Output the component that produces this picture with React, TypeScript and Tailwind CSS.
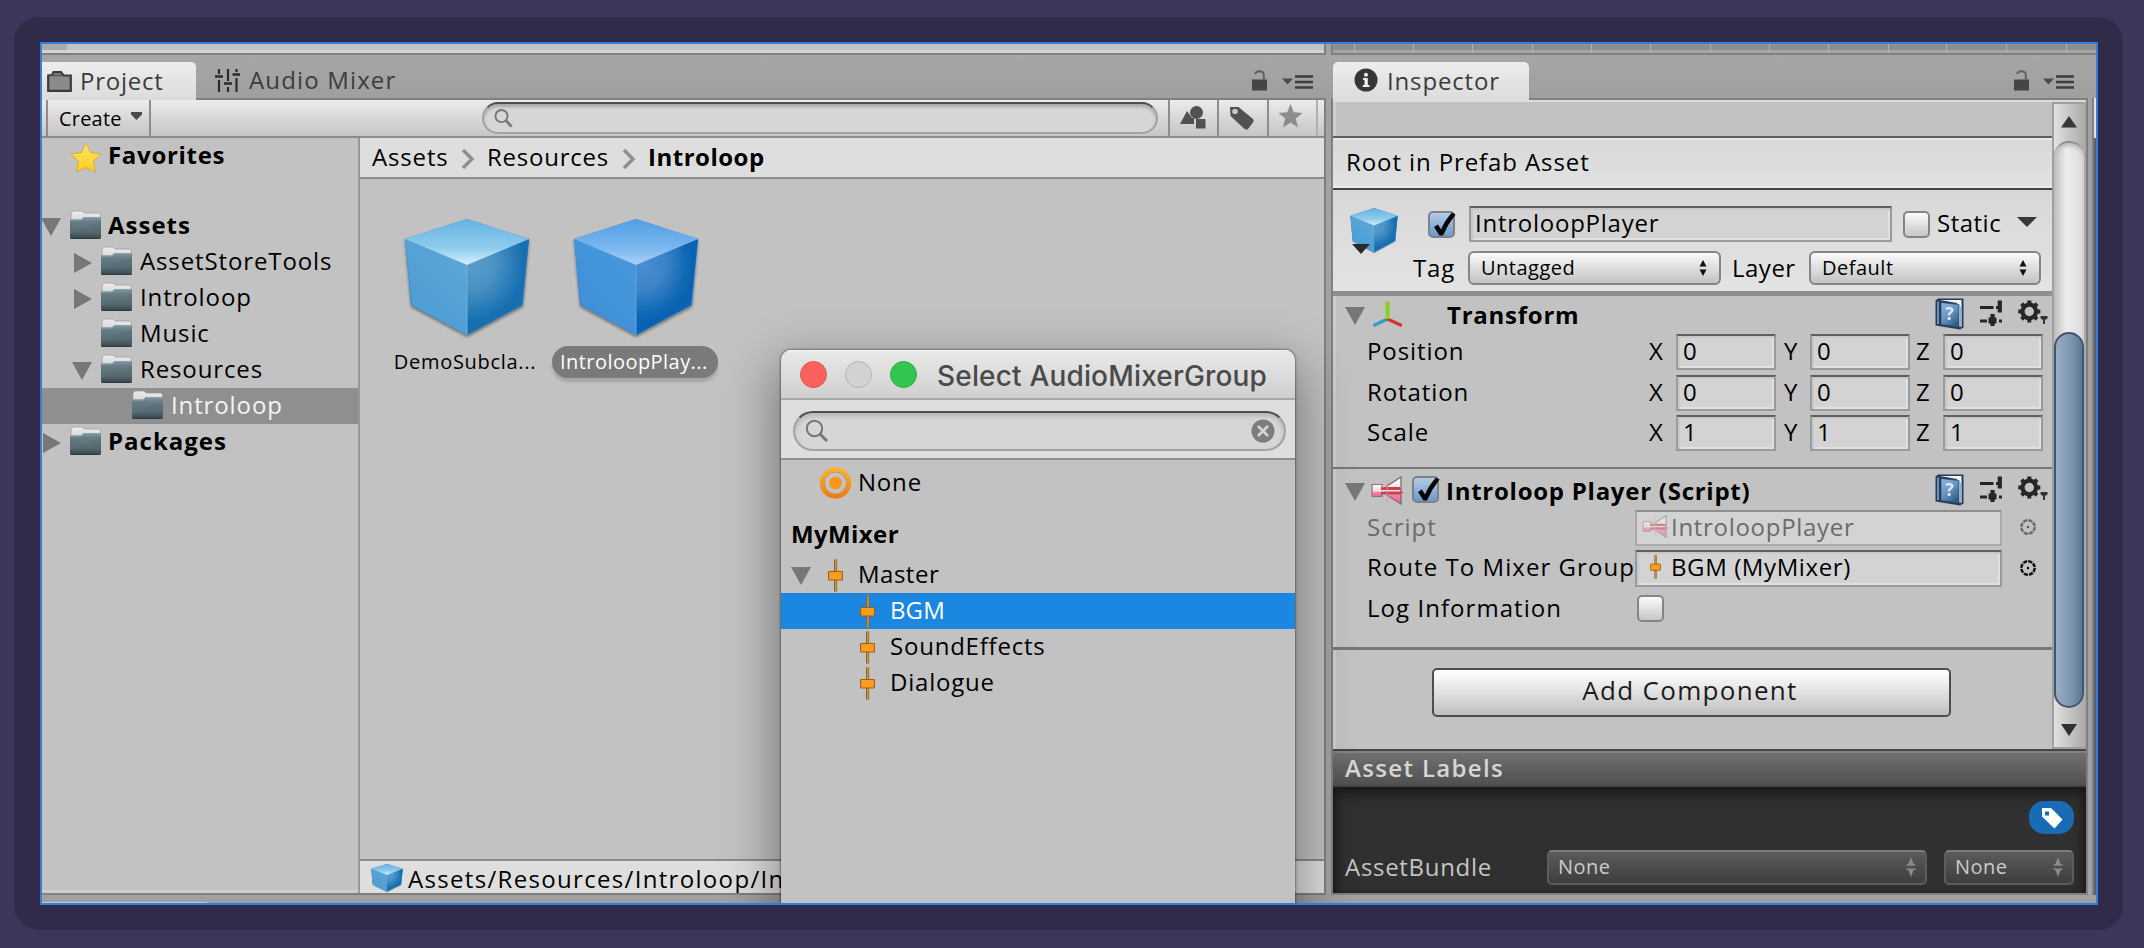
import React from "react";

type Kids = { children?: React.ReactNode; className?: string };

const Label = ({ children, className = "" }: Kids) => (
  <span className={`whitespace-nowrap ${className}`}>{children}</span>
);

const Cube = ({ id, w, h, deep = false }: { id: string; w: number; h: number; deep?: boolean }) => (
  <svg width={w} height={h} viewBox="0 0 126 118" className="shrink-0 overflow-visible" preserveAspectRatio="none">
    <defs>
      <linearGradient id={`${id}t`} x1="0" y1="0" x2="0" y2="1">
        <stop offset="0" stopColor={deep ? "#519fe4" : "#67b2e4"} />
        <stop offset="0.6" stopColor={deep ? "#78b5ee" : "#8ccaec"} />
        <stop offset="1" stopColor={deep ? "#a8d2f8" : "#d6effa"} />
      </linearGradient>
      <linearGradient id={`${id}l`} x1="0.2" y1="1" x2="0.8" y2="0">
        <stop offset="0" stopColor={deep ? "#3d8fd6" : "#4a9fd6"} />
        <stop offset="0.4" stopColor={deep ? "#4192d8" : "#519fd4"} />
        <stop offset="1" stopColor={deep ? "#4797dc" : "#5ea8d8"} />
      </linearGradient>
      <radialGradient id={`${id}r`} gradientUnits="userSpaceOnUse" cx="68" cy="44" r="58" gradientTransform="translate(68 44) scale(0.9 1) translate(-68 -44)">
        <stop offset="0" stopColor={deep ? "#4a8ed0" : "#5a9bc8"} />
        <stop offset="0.45" stopColor={deep ? "#3d85c8" : "#4a92c4"} />
        <stop offset="0.85" stopColor={deep ? "#126ab6" : "#2478b5"} />
        <stop offset="1" stopColor={deep ? "#0a63b2" : "#176fb0"} />
      </radialGradient>
      <filter id={`${id}s`} x="-10%" y="-10%" width="120%" height="125%">
        <feDropShadow dx="0" dy="2" stdDeviation="1.8" floodColor="#000" floodOpacity="0.45" />
      </filter>
    </defs>
    <g filter={`url(#${id}s)`}>
      <path d="M63 0 L125 20 L119 86 L63 116 L7 86 L1 20 Z" fill="#2f86c8" />
    </g>
    <path d="M1 20 L63 46 L63 116 L8 86 Z" fill={`url(#${id}l)`} />
    <path d="M125 20 L63 46 L63 116 L118 86 Z" fill={`url(#${id}r)`} />
    <path d="M63 0 L125 20 L63 46 L1 20 Z" fill={`url(#${id}t)`} />
    <path d="M63 46 V116" stroke={deep ? "#5aa3e2" : "#6cb3e0"} strokeWidth="1" />
  </svg>
);

const Folder = () => (
  <svg width="33" height="30" viewBox="0 0 33 30" className="shrink-0">
    <defs>
      <linearGradient id="fold" x1="0" y1="0" x2="0" y2="1">
        <stop offset="0" stopColor="#8097a1" />
        <stop offset="0.25" stopColor="#667b84" />
        <stop offset="0.7" stopColor="#5a6c74" />
        <stop offset="1" stopColor="#3a484f" />
      </linearGradient>
      <linearGradient id="foldb" x1="0" y1="0" x2="0" y2="1">
        <stop offset="0" stopColor="#ececec" />
        <stop offset="1" stopColor="#b5b5b5" />
      </linearGradient>
    </defs>
    <path d="M2 28 V4.500 Q2 1 5 1 H12 Q14.500 1 15 3 H29.500 Q31.500 3 31.500 5 V28 Z" fill="url(#foldb)" stroke="#999" strokeWidth="0.700" />
    <path d="M1 10 Q1 9.500 2.500 9.500 H12 L14.500 7 H31 Q32 7 32 8.500 V27 Q32 28.500 30.500 28.500 H2.500 Q1 28.500 1 27 Z" fill="url(#fold)" />
    <path d="M1.500 10 H12.300 L14.800 7.500 H31.500" stroke="#8aa2ac" strokeWidth="1" fill="none" />
    <path d="M1 25 L32 11 V27 Q32 28.500 30.500 28.500 H2.500 Q1 28.500 1 27 Z" fill="#2c3a42" opacity="0.08" />
    <path d="M1.500 28.500 H31.500" stroke="#2e3a40" strokeWidth="1" />
  </svg>
);

const Down = () => (
  <svg width="20" height="18" viewBox="0 0 20 18" className="shrink-0"><path d="M0 0 H20 L10 18 Z" fill="#777" /></svg>
);
const Right = () => (
  <svg width="18" height="20" viewBox="0 0 18 20" className="shrink-0"><path d="M0 0 V20 L18 10 Z" fill="#777" /></svg>
);

const Fader = ({ w = 15, h = 33, shade = "#6f6657" }: { w?: number; h?: number; shade?: string }) => (
  <svg width={w} height={h} viewBox="0 0 15 33" className="shrink-0">
    <rect x="6" y="0.500" width="3.200" height="32" fill={shade} />
    <rect x="7" y="0.500" width="1.600" height="32" fill="#e08f1e" />
    <rect x="0.600" y="12.500" width="13.800" height="8.500" rx="0.800" fill="#fb9d1f" stroke="#98601a" strokeWidth="1.100" />
  </svg>
);

const Lock = () => (
  <svg width="18" height="21" viewBox="0 0 18 21" className="shrink-0">
    <rect x="1" y="9.500" width="15" height="11" fill="#454545" />
    <path d="M4 4 Q5 1.200 8.500 1.200 Q12.800 1.200 12.800 5 V10" fill="none" stroke="#606060" strokeWidth="1.900" />
  </svg>
);
const PaneMenu = () => (
  <svg width="32" height="14" viewBox="0 0 32 14" className="shrink-0">
    <path d="M0 3.500 H11 L5.500 9.500 Z" fill="#4a4a4a" />
    <path d="M13 1.500 H31 M13 7 H31 M13 12.500 H31" stroke="#3e3e3e" strokeWidth="2.400" />
  </svg>
);

const Magnifier = () => (
  <svg width="24" height="24" viewBox="0 0 24 24" fill="none" stroke="#777" className="shrink-0">
    <circle cx="9.500" cy="9.500" r="7.700" strokeWidth="2" />
    <path d="M15 15 L22 22" strokeWidth="3" />
  </svg>
);

const Check = ({ on = false }: { on?: boolean }) => (
  <div
    className={`h-[27px] w-[27px] shrink-0 rounded-[5px] border-2 bg-linear-to-b ${
      on ? "border-[#7c8288] from-[#b4cbe3] to-[#6c9acb]" : "border-[#858585] from-[#fbfbfb] to-[#c8c6c7]"
    }`}
  >
    {on && (
      <svg width="26" height="26" viewBox="0 0 26 26" className="overflow-visible">
        <path d="M4 14 L8 11.500 L11 16.500 Q15 7 22 -0.500 L25.500 1.500 Q18 11 13 22.500 L9.500 22.500 Z" fill="#050505" />
      </svg>
    )}
  </div>
);

const Field = ({ children, className = "" }: Kids) => (
  <div
    className={`flex h-[36px] shrink-0 items-center overflow-hidden border-2 border-[#9a9a9a] border-t-[#5f5f5f] bg-[#d3d3d3] pb-[3px] text-[24px] tracking-[0.75px] shadow-[inset_2px_2px_0_#c8c8c8,inset_-2px_-2px_0_#e0e0e0] ${className}`}
  >
    {children}
  </div>
);

const Stepper = ({ color }: { color: string }) => (
  <svg width="8" height="16" viewBox="0 0 8 16" className="shrink-0">
    <path d="M4 0 L7.500 6.500 H0.500 Z M4 16 L7.500 9.500 H0.500 Z" fill={color} />
  </svg>
);

const Popup = ({ children, className = "" }: Kids) => (
  <div
    className={`flex h-[34px] shrink-0 items-center justify-between rounded-[6px] border-2 border-[#858585] bg-linear-to-b from-[#fbfbfb] to-[#c4c2c3] pr-[12px] pb-px text-[20px] tracking-[0.5px] ${className}`}
  >
    <span>{children}</span>
    <Stepper color="#111" />
  </div>
);
const DarkPopup = ({ children, className = "" }: Kids) => (
  <div
    className={`flex h-[35px] shrink-0 items-center justify-between rounded-[5px] border-2 border-[#5c5c5c] border-t-[#7c7c7c] bg-linear-to-b from-[#5b5b5b] to-[#3e3e3e] text-[20px] tracking-[0.5px] text-[#cbcbcb] ${className}`}
  >
    <span>{children}</span>
    <svg width="12" height="22" viewBox="0 0 12 22">
      <path d="M6 1 L9 9 H3 Z M6 21 L9 13 H3 Z" fill="#8a8a8a" />
      <path d="M1.500 9 H10.500 M1.500 13.200 H10.500" stroke="#8a8a8a" strokeWidth="1.600" />
    </svg>
  </div>
);

const Book = () => (
  <svg width="29" height="32" viewBox="0 0 29 32" className="shrink-0">
    <defs>
      <linearGradient id="bk" x1="0" y1="0" x2="0.700" y2="1">
        <stop offset="0" stopColor="#91b6d8" />
        <stop offset="0.500" stopColor="#6a99c6" />
        <stop offset="1" stopColor="#345a82" />
      </linearGradient>
    </defs>
    <path d="M0.500 2.500 L3 0.500 H28.500 V29.500 L25 31.500 L0.500 27.500 Z" fill="#263c57" />
    <path d="M5 2 H26.500 V28.500 H22 V5 Z" fill="#f2f5f8" />
    <path d="M3 3.500 V26" stroke="#7fa5ca" strokeWidth="1.600" />
    <path d="M6 4.500 L24 6.500 V29 L6 26.500 Z" fill="url(#bk)" stroke="#2c4d70" strokeWidth="0.800" />
    <path d="M26 9 V28.500" stroke="#8fb0d0" strokeWidth="2" fill="none" />
    <text x="14.500" y="22" textAnchor="middle" fontSize="17" fontFamily="Open Sans" fontWeight="700" fill="#dce9f5">?</text>
  </svg>
);
const Presets = () => (
  <svg width="22" height="26" viewBox="0 0 22 26" stroke="#252525" className="shrink-0">
    <path d="M0 7.500 H13.500 M16 7.500 H19 M0 21 H7 M19 21 H22" strokeWidth="2.800" />
    <path d="M19.800 0.500 V12.500 M12.500 14 V26" strokeWidth="4.200" />
    <path d="M8.500 20.500 H16.500" strokeWidth="6" />
  </svg>
);
const Gear = () => (
  <svg width="30" height="26" viewBox="0 0 30 26" className="shrink-0">
    <g stroke="#262626" fill="none">
      <circle cx="11.300" cy="11.500" r="6.800" strokeWidth="4.200" />
      {[0, 45, 90, 135].map((a) => (
        <g key={a} transform={`rotate(${a} 11.300 11.500)`}>
          <path d="M11.300 0.500 V4 M11.300 19 V22.500" strokeWidth="4" />
        </g>
      ))}
    </g>
    <path d="M22.500 16 H29.500 V18.500 L27 20 V24 H25 V20 L22.500 18.500 Z" fill="#333" />
  </svg>
);

const Target = ({ dim = false }: { dim?: boolean }) => (
  <svg width="16" height="16" viewBox="0 0 16 16" className="shrink-0">
    <circle cx="8" cy="8" r="6.700" fill="none" stroke={dim ? "#6a6a6a" : "#111"} strokeWidth="2.500" strokeDasharray="4.200 1.060" />
    <circle cx="8" cy="8" r="1.200" fill={dim ? "#555" : "#000"} />
  </svg>
);

const Horn = ({ w, h, dim = false, id }: { w: number; h: number; dim?: boolean; id: string }) => (
  <svg width={w} height={h} viewBox="0 0 32 29" className={`shrink-0 ${dim ? "opacity-50" : ""}`}>
    <defs>
      <linearGradient id={id} x1="0" y1="0" x2="0" y2="1">
        <stop offset="0" stopColor="#fff" />
        <stop offset="0.400" stopColor="#f4e4e8" />
        <stop offset="0.600" stopColor="#f58bab" />
        <stop offset="1" stopColor="#fa5f92" />
      </linearGradient>
    </defs>
    <path d="M16 10 L30 1 V28 L16 19 Z" fill={`url(#${id})`} stroke="#7c6a6e" strokeWidth="1.300" />
    <path d="M1 8.500 H11 V20.500 H1 Z" fill={`url(#${id})`} stroke="#8e7377" strokeWidth="1.200" />
    <rect x="10" y="11" width="19" height="7.500" fill="#b9475a" />
    <path d="M2 14.800 H29" stroke="#f1e2c8" strokeWidth="1.800" />
    <path d="M13 13 H30 M13 16.500 H32" stroke="#d63b4c" strokeWidth="1.400" />
    <path d="M16 1 V27 M12 6 V12 M19 18 L16 26" stroke="#e79aa9" strokeWidth="0.900" fill="none" />
  </svg>
);

const TreeRow = ({
  pad, arrow, label, bold = false, selected = false,
}: { pad: string; arrow?: "down" | "right"; label: string; bold?: boolean; selected?: boolean }) => (
  <div className={`flex h-[36px] items-center ${pad} ${selected ? "bg-[#8f8f8f] text-[#f4f4f4]" : ""}`}>
    <div className="-ml-px flex w-[28px] shrink-0 items-center pt-[2px]">
      {arrow === "down" && <Down />}
      {arrow === "right" && <div className="pl-[2px]"><Right /></div>}
    </div>
    <div className="-mt-[3px]"><Folder /></div>
    <Label className={`pb-[2px] text-[24px] ${bold ? "pl-[6px] font-bold tracking-[1px]" : "pl-[7px] tracking-[0.88px]"}`}>{label}</Label>
  </div>
);

const Crumb = () => (
  <svg width="14" height="20" viewBox="0 0 14 20" className="mt-[5px] shrink-0">
    <path d="M2 1 L11 10 L2 19" fill="none" stroke="#8e8e8e" strokeWidth="3.400" />
  </svg>
);

const ProjectPane = () => (
  <div className="flex w-[1284px] shrink-0 flex-col border-y-2 border-r-2 border-[#808080] bg-[#c2c2c2]">
    <div className="flex h-[38px] shrink-0 items-center border-b-2 border-[#8b8b8b] bg-linear-to-b from-[#ebebeb] via-[#d8d8d8] to-[#c6c6c6] pl-[4px]">
      <div className="flex h-full w-[105px] items-center border-x-2 border-[#8e8e8e] pl-[11px]">
        <Label className="pt-[2px] text-[20px] tracking-[0.2px]">Create</Label>
        <svg width="11" height="8" viewBox="0 0 11 8" className="-mt-[4px] ml-[9px]"><path d="M0 0 H11 V2.500 L5.500 8 L0 2.500 Z" fill="#4a4a4a" /></svg>
      </div>
      <div className="-mt-px ml-[331px] flex h-[32px] w-[676px] items-center rounded-full border-2 border-[#a2a2a2] border-t-[#4d4d4d] bg-[#d6d6d6] pl-[10px] shadow-[inset_0_3px_3px_#a9a9a9]">
        <svg width="19" height="20" viewBox="0 0 24 24" fill="none" stroke="#777"><circle cx="9.500" cy="9.500" r="7.700" strokeWidth="2.400" /><path d="M15 15 L22 23" strokeWidth="3.400" /></svg>
      </div>
      <div className="ml-[10px] flex h-full w-[49px] items-center border-l-2 border-[#8e8e8e] pl-[10px]">
        <svg width="26" height="26" viewBox="0 0 26 26" fill="#515151"><circle cx="16.500" cy="7.500" r="6.500" /><path d="M0 19 L7 6 L12 13 H14 V19 Z" /><rect x="16" y="14" width="9.500" height="9.500" /></svg>
      </div>
      <div className="flex h-full w-[50px] items-center border-l-2 border-[#8e8e8e] pl-[10px]">
        <svg width="26" height="26" viewBox="0 0 26 26"><path d="M1 2 H9.500 L24 14 Q25.500 16 24 17.500 L19 24 Q17 25.500 15 23.500 L1.500 11 Z" fill="#515151" /><circle cx="6" cy="6.500" r="2.800" fill="#c8c8c8" /></svg>
      </div>
      <div className="flex h-full w-[51px] items-center border-x-2 border-[#8e8e8e] border-r-[#b0b0b0] pb-[4px] pl-[9px]">
        <svg width="25" height="24" viewBox="0 0 25 24"><path d="M12.500 0 L15.800 8.300 L24.500 9 L17.800 14.600 L20 23.500 L12.500 18.600 L5 23.500 L7.200 14.600 L0.500 9 L9.200 8.300 Z" fill="#8c8c8c" /></svg>
      </div>
    </div>

    <div className="flex min-h-0 flex-1">
      <div className="flex w-[318px] shrink-0 flex-col overflow-hidden border-r-2 border-[#979797] shadow-[inset_0_-3px_0_#cdcdcd]">
        <div className="flex h-[36px] items-center pl-[28px]">
          <svg width="32" height="31" viewBox="0 0 32 31" className="mt-[3px]">
            <defs><linearGradient id="st" x1="0" y1="0" x2="0" y2="1"><stop offset="0" stopColor="#ffe664" /><stop offset="1" stopColor="#ffcb1f" /></linearGradient></defs>
            <path d="M16 1 L20.500 10.500 L31 12 L23.500 19 L25.500 30 L16 25.500 L6.500 30 L8.500 19 L1 12 L11.500 10.500 Z" fill="url(#st)" stroke="#d0a53a" strokeWidth="0.800" />
          </svg>
          <Label className="pb-[2px] pl-[6px] text-[24px] font-bold tracking-[0.7px]">Favorites</Label>
        </div>
        <div className="h-[34px]" />
        <TreeRow pad="pl-0" arrow="down" label="Assets" bold />
        <TreeRow pad="pl-[31px]" arrow="right" label="AssetStoreTools" />
        <TreeRow pad="pl-[31px]" arrow="right" label="Introloop" />
        <TreeRow pad="pl-[31px]" label="Music" />
        <TreeRow pad="pl-[31px]" arrow="down" label="Resources" />
        <TreeRow pad="pl-[62px]" label="Introloop" selected />
        <TreeRow pad="pl-0" arrow="right" label="Packages" bold />
      </div>

      <div className="flex min-w-0 flex-1 flex-col">
        <div className="flex h-[41px] shrink-0 items-center border-b-2 border-[#8f8f8f] bg-[#dedede] pb-[2px] pl-[12px] text-[24px]">
          <Label className="w-[89px] tracking-[0.85px]">Assets</Label>
          <Crumb />
          <Label className="w-[147px] pl-[12px] tracking-[0.75px]">Resources</Label>
          <Crumb />
          <Label className="pl-[12px] font-bold tracking-[0.5px]">Introloop</Label>
        </div>
        <div className="flex min-h-0 flex-1 items-start pt-[40px] pl-[23px]">
          <div className="flex w-[168px] flex-col items-center">
            <Cube id="ca" w={126} h={118} />
            <Label className="mt-[10px] mr-[4px] text-[20px] leading-[30px] tracking-[0.7px]">DemoSubcla...</Label>
          </div>
          <div className="flex w-[170px] flex-col items-center">
            <Cube id="cb" w={126} h={118} deep />
            <Label className="mt-[9px] mr-[2px] h-[32px] w-[166px] rounded-full bg-[#7a7a7a] pl-[8px] text-[20px] leading-[31px] tracking-[0.45px] text-white shadow-[0_4px_3px_rgba(0,0,0,0.15)]">IntroloopPlay...</Label>
          </div>
        </div>
        <div className="flex h-[34px] shrink-0 items-center overflow-hidden border-t-2 border-[#8b8b8b] bg-[#dedede] pl-[11px]">
          <div className="pt-[2px]"><Cube id="cf" w={32} h={28} /></div>
          <Label className="pt-[3px] pl-[5px] text-[24px] leading-[28px] tracking-[1.32px]">Assets/Resources/Introloop/In</Label>
        </div>
      </div>
    </div>
  </div>
);

const HeaderTools = () => (
  <div className="flex items-start">
    <div className="-mt-[2px]"><Book /></div>
    <div className="ml-[16px]"><Presets /></div>
    <div className="ml-[16px]"><Gear /></div>
  </div>
);

const Vector = ({ name, value, gap }: { name: string; value: string; gap: string }) => (
  <div className={`flex h-[36px] items-center ${gap}`}>
    <Label className="w-[283px] pb-[3px] pl-px tracking-[0.9px]">{name}</Label>
    <Label className="w-[27px] pb-[3px]">X</Label>
    <Field className="w-[100px] pl-[5px]">{value}</Field>
    <Label className="w-[34px] pb-[3px] pl-[8px]">Y</Label>
    <Field className="w-[100px] pl-[5px]">{value}</Field>
    <Label className="w-[33px] pb-[3px] pl-[6px]">Z</Label>
    <Field className="w-[100px] pl-[5px]">{value}</Field>
  </div>
);

const InspectorPane = () => (
  <div className="flex w-[757px] shrink-0 flex-col border-2 border-[#808080] bg-[#c2c2c2]">
    <div className="flex h-[649px] shrink-0 border-t-2 border-[#dcdcdc]">
      <div className="flex w-[719px] shrink-0 flex-col text-[24px]">
        <div className="h-[36px] shrink-0 border-b-2 border-[#606060] shadow-[inset_3px_0_0_#cfcfcf]" />
        <div className="flex h-[52px] shrink-0 items-center border-b-2 border-[#444] bg-linear-to-b from-[#d8d8d8] to-[#e2e2e2] pb-[2px] pl-[13px] shadow-[inset_0_2px_0_#e6e6e6,inset_0_-2px_0_#ececec]">
          <Label className="tracking-[0.9px]">Root in Prefab Asset</Label>
        </div>
        <div className="flex h-[106px] shrink-0 border-b-[5px] border-[#8f8f8f] bg-linear-to-b from-[#d8d8d8] to-[#e3e3e3] pt-[16px] pl-[17px]">
          <div className="relative w-[63px] shrink-0 pt-[2px]">
            <Cube id="ch" w={48} h={45} />
            <svg width="18" height="10" viewBox="0 0 18 10" className="absolute top-[38px] left-[2px]"><path d="M0 0 H18 L9 10 Z" fill="#2a2a2a" /></svg>
          </div>
          <div className="flex flex-col">
            <div className="flex h-[36px] items-center pl-[15px]">
              <Check on />
              <Field className="ml-[14px] w-[423px] pl-[4px] tracking-[0.7px]">IntroloopPlayer</Field>
              <div className="ml-[11px]"><Check /></div>
              <Label className="w-[87px] pb-[2px] pl-[7px] tracking-[0.5px]">Static</Label>
              <svg width="20" height="10" viewBox="0 0 20 10" className="-mt-[4px]"><path d="M0 0 H20 L10 10 Z" fill="#383838" /></svg>
            </div>
            <div className="mt-[9px] flex h-[34px] items-center">
              <Label className="w-[55px] tracking-[0.8px]">Tag</Label>
              <Popup className="w-[253px] pl-[11px]">Untagged</Popup>
              <Label className="w-[88px] pl-[11px] tracking-[0.5px]">Layer</Label>
              <Popup className="w-[232px] pl-[11px]">Default</Popup>
            </div>
          </div>
        </div>

        <div className="flex h-[173px] shrink-0 flex-col border-b-2 border-[#777] pl-[12px] shadow-[inset_3px_0_0_#cdcdcd]">
          <div className="flex h-[38px] items-start pt-[4px]">
            <div className="pt-[7px]"><Down /></div>
            <svg width="30" height="27" viewBox="0 0 30 27" className="ml-[8px] shrink-0">
              <path d="M14.500 19 L1.500 25" stroke="#2f9ccd" strokeWidth="3.200" strokeLinecap="round" />
              <path d="M14.500 19 L27.500 25" stroke="#d6332f" strokeWidth="3.200" strokeLinecap="round" />
              <path d="M14.500 19 V1.500" stroke="#8ccf1c" strokeWidth="4" />
            </svg>
            <Label className="w-[533px] shrink-0 pl-[44px] leading-[30px] font-bold tracking-[0.75px]">Transform</Label>
            <div className="-ml-px"><HeaderTools /></div>
          </div>
          <div className="pl-[21px]">
            <Vector name="Position" value="0" gap="" />
            <Vector name="Rotation" value="0" gap="mt-[5px]" />
            <Vector name="Scale" value="1" gap="mt-[4px]" />
          </div>
        </div>

        <div className="flex h-[181px] shrink-0 flex-col border-b-[3px] border-[#777] pl-[12px] shadow-[inset_3px_0_0_#cdcdcd]">
          <div className="flex h-[41px] items-start pt-[7px]">
            <div className="pt-[7px]"><Down /></div>
            <div className="ml-[6px]"><Horn id="h1" w={32} h={29} /></div>
            <div className="ml-[9px]"><Check on /></div>
            <Label className="w-[497px] pl-[7px] leading-[30px] font-bold tracking-[0.74px]">Introloop Player (Script)</Label>
            <div className="-ml-[1px]"><HeaderTools /></div>
          </div>
          <div className="flex h-[36px] items-center pl-[21px] text-[#6b6b6b]">
            <Label className="w-[269px] pb-[3px] pl-px tracking-[1px]">Script</Label>
            <Field className="w-[367px] border-[#aaaaaa] border-t-[#8e8e8e] bg-[#cacaca] pl-[5px] shadow-none">
              <Horn id="h2" w={26} h={23} dim />
              <span className="pl-[3px] tracking-[0.7px]">IntroloopPlayer</span>
            </Field>
            <div className="-mt-[2px] ml-[18px]"><Target dim /></div>
          </div>
          <div className="mt-[4px] flex h-[37px] items-center pl-[21px]">
            <Label className="w-[269px] pb-[3px] pl-px tracking-[1.05px]">Route To Mixer Group</Label>
            <Field className="h-[37px] w-[367px] pl-[13px]">
              <Fader w={11} h={26} />
              <span className="pl-[10px] tracking-[0.6px]">BGM (MyMixer)</span>
            </Field>
            <div className="-mt-[2px] ml-[18px]"><Target /></div>
          </div>
          <div className="mt-[5px] flex h-[33px] items-center pl-[21px]">
            <Label className="w-[271px] pb-px pl-px tracking-[1.05px]">Log Information</Label>
            <Check />
          </div>
        </div>

        <div className="flex flex-1 items-start pt-[18px] pl-[99px] shadow-[inset_3px_0_0_#cdcdcd]">
          <div className="flex h-[49px] w-[519px] items-center justify-center rounded-[5px] border-2 border-[#4e4e4e] bg-linear-to-b from-white via-[#e2e1e1] to-[#c0bebf] pr-[3px] pb-[5px] text-[26px] tracking-[1.3px] text-[#1c1c1c]">Add Component</div>
        </div>
      </div>

      <div className="flex w-[34px] shrink-0 flex-col border-l-2 border-[#a0a0a0] bg-linear-to-r from-[#e2e2e2] to-[#a8a8a8]">
        <div className="flex h-[39px] w-[30px] shrink-0 justify-center border-t-2 border-[#a0a0a0] pt-[12px]">
          <svg width="16" height="12" viewBox="0 0 16 12"><path d="M8 0 L16 11.500 H0 Z" fill="#383838" /></svg>
        </div>
        <div className="flex h-[567px] w-[30px] shrink-0 flex-col justify-end rounded-[15px] border-t-2 border-[#8c8c8c] bg-linear-to-r from-[#bdbdbd] via-[#ededed] via-40% to-[#dcdcdc] shadow-[inset_0_3px_4px_#bbb]">
          <div className="h-[376px] rounded-[15px] border-2 border-[#3d5673] bg-linear-to-r from-[#9badc5] via-[#7d93ad] via-60% to-[#5b7998]" />
        </div>
        <div className="flex flex-1 border-b-2 border-[#a0a0a0] pt-[16px] pl-[7px]">
          <svg width="16" height="12" viewBox="0 0 16 12"><path d="M8 12 L16 0 H0 Z" fill="#303030" /></svg>
        </div>
      </div>
    </div>

    <div className="flex h-[38px] shrink-0 items-center border-y-2 border-[#454545] bg-linear-to-b from-[#727272] to-[#505050] pb-px pl-[12px] text-[24px] font-semibold tracking-[1.35px] text-[#d6d6d6] shadow-[inset_0_2px_0_#828282]">
      Asset Labels
    </div>
    <div className="flex min-h-0 flex-1 flex-col bg-[#303030] pr-[12px] pl-[12px] shadow-[inset_0_8px_14px_-2px_#181818,inset_6px_0_8px_-4px_#1c1c1c,inset_-6px_0_8px_-4px_#1c1c1c]">
      <div className="flex justify-end pt-[14px]">
        <div className="flex h-[33px] w-[45px] items-center justify-center rounded-[15px] bg-[#176cb5]">
          <svg width="22" height="22" viewBox="0 0 22 22"><path d="M1 1 H10 L21.500 12.500 L13.500 21.500 L1 9.500 Z" fill="#fff" /><rect x="4" y="4.500" width="4" height="4" fill="#176cb5" /></svg>
        </div>
      </div>
      <div className="mt-[16px] flex h-[35px] items-center">
        <Label className="w-[202px] pb-px text-[24px] tracking-[0.7px] text-[#c4c4c4]">AssetBundle</Label>
        <DarkPopup className="w-[380px] pr-[8px] pb-[2px] pl-[9px]">None</DarkPopup>
        <DarkPopup className="ml-auto w-[130px] pr-[8px] pb-[2px] pl-[9px]">None</DarkPopup>
      </div>
    </div>
  </div>
);

const MixerRow = ({ label, selected = false }: { label: string; selected?: boolean }) => (
  <div className={`flex h-[36px] items-center pl-[79px] ${selected ? "bg-[#1c87e0] text-white" : ""}`}>
    <Fader />
    <Label className={`pb-[2px] pl-[15px] ${selected ? "tracking-[0.1px]" : "tracking-[0.78px]"}`}>{label}</Label>
  </div>
);

const PickerDialog = () => (
  <div className="absolute top-[306px] left-[739px] flex h-[640px] w-[514px] flex-col overflow-hidden rounded-[10px] bg-[#c2c2c2] text-[24px] shadow-[0_0_2px_1px_rgba(0,0,0,0.35),0_20px_50px_8px_rgba(0,0,0,0.36)]">
    <div className="flex h-[50px] shrink-0 items-center border-b-2 border-[#a9a9a9] bg-linear-to-b from-[#e9e9e9] to-[#d0d0d0] pl-[19px] shadow-[inset_0_1px_0_#f6f6f6]">
      <div className="h-[27px] w-[27px] rounded-full border border-[#e2524c] bg-[#fc625c]" />
      <div className="ml-[18px] h-[27px] w-[27px] rounded-full border border-[#b4b4b4] bg-[#d2d2d2]" />
      <div className="ml-[18px] h-[27px] w-[27px] rounded-full border border-[#27ad3d] bg-[#32c651]" />
      <Label className="pt-[3px] pl-[20px] font-[Inter] text-[28px] font-medium tracking-[0.17px] text-[#4a4a4a]">Select AudioMixerGroup</Label>
    </div>
    <div className="flex h-[60px] shrink-0 items-center border-b-2 border-[#8f8f8f] bg-[#dedede] pt-[3px] pl-[12px]">
      <div className="flex h-[40px] w-[493px] items-center justify-between rounded-full border-2 border-[#a2a2a2] border-t-[#4d4d4d] bg-[#d6d6d6] pr-[9px] pl-[10px] shadow-[inset_0_3px_4px_#b4b4b4]">
        <Magnifier />
        <svg width="24" height="24" viewBox="0 0 24 24"><circle cx="12" cy="12" r="11.500" fill="#7d7d7d" /><path d="M7 7 L17 17 M17 7 L7 17" stroke="#d6d6d6" strokeWidth="2.600" /></svg>
      </div>
    </div>
    <div className="flex h-[46px] shrink-0 items-center pl-[38px]">
      <svg width="33" height="34" viewBox="0 0 33 34">
        <defs><linearGradient id="rg" x1="0" y1="0" x2="0" y2="1"><stop offset="0" stopColor="#fcb427" /><stop offset="1" stopColor="#f57a0c" /></linearGradient></defs>
        <circle cx="16.500" cy="17" r="13.500" fill="none" stroke="url(#rg)" strokeWidth="4.400" />
        <circle cx="16.500" cy="17" r="11" fill="none" stroke="#b8874a" strokeWidth="0.800" />
        <circle cx="16.500" cy="17" r="6.500" fill="#fb981c" />
      </svg>
      <Label className="pb-[2px] pl-[6px] tracking-[0.8px]">None</Label>
    </div>
    <div className="flex h-[51px] shrink-0 items-center pt-[5px] pl-[10px]"><Label className="font-bold tracking-[0.4px]">MyMixer</Label></div>
    <div className="flex h-[36px] shrink-0 items-center pl-[10px]">
      <div className="pt-[2px]"><Down /></div>
      <div className="ml-[17px]"><Fader /></div>
      <Label className="pb-[2px] pl-[15px] tracking-[0.5px]">Master</Label>
    </div>
    <MixerRow label="BGM" selected />
    <MixerRow label="SoundEffects" />
    <MixerRow label="Dialogue" />
  </div>
);

const ticks = [21, 80, 139, 199, 258, 317, 377, 436, 495, 555, 613, 673, 733];

export default function App() {
  return (
    <div className="h-[948px] w-[2144px] overflow-hidden bg-[#3d355a] pt-[17px] pl-[14px] font-['Open_Sans',sans-serif] text-black">
      <div className="h-[913px] w-[2109px] rounded-[25px] bg-[#312a49] pt-[25px] pl-[26px]">
        <div className="relative flex h-[863px] w-[2058px] flex-col overflow-hidden border-2 border-[#317fdc] bg-[#a2a2a2]">
          <div className="flex h-[11px] shrink-0">
            <div className="flex w-[1284px] shrink-0 border-r-2 border-b-2 border-[#808080] bg-[#c4c4c4] shadow-[inset_0_-3px_0_#d4d4d4]">
              <div className="h-[6px] w-[25px] bg-[#aaa]" />
            </div>
            <div className="w-[5px] shrink-0" />
            <div className="relative flex-1 border-b-2 border-l-2 border-[#808080] bg-[#8e8e8e] shadow-[inset_0_-3px_0_#a6a6a6]">
              {ticks.map((t) => (
                <div key={t} className="absolute top-0 h-[9px] w-px bg-[#b4b4b4]" style={{ left: t }} />
              ))}
            </div>
          </div>

          <div className="flex h-[43px] shrink-0 items-end bg-linear-to-b from-[#a6a6a6] to-[#9f9f9f] text-[24px] text-[#3c3c3c]">
            <div className="relative z-10 -mb-[2px] flex h-[38px] w-[154px] shrink-0 items-center rounded-tr-[5px] bg-linear-to-b from-[#ededed] to-[#dcdcdc] pl-[5px]">
              <svg width="25" height="21" viewBox="0 0 25 21"><path d="M1.200 19.800 V4.500 L5 4 L6.500 1.200 H14 L16.500 4.500 H23.800 V19.800 Z" fill="#8a8a8a" stroke="#3b3b3b" strokeWidth="2.200" /><path d="M3 4.500 H15" stroke="#555" strokeWidth="1.500" /></svg>
              <Label className="pl-[8px] tracking-[0.75px]">Project</Label>
            </div>
            <div className="flex h-[36px] flex-1 items-center pl-[19px]">
              <svg width="25" height="23" viewBox="0 0 25 23" className="shrink-0" stroke="#2c2c2c" strokeWidth="2.200">
                <path d="M4 0 V5 M4 11 V23 M13 0 V12 M13 18 V23 M21.500 0 V3 M21.500 9 V23" />
                <path d="M0 7.500 H8 M9 14.500 H17 M17.500 5.500 H25.500" strokeWidth="2.600" />
              </svg>
              <Label className="pl-[9px] tracking-[1.15px]">Audio Mixer</Label>
              <div className="mr-[19px] ml-auto flex items-center">
                <Lock />
                <div className="mt-[4px] ml-[13px]"><PaneMenu /></div>
              </div>
            </div>
            <div className="relative z-10 -mb-[2px] flex h-[38px] w-[196px] shrink-0 items-center rounded-t-[5px] bg-linear-to-b from-[#ededed] to-[#dcdcdc] pl-[21px]">
              <svg width="24" height="24" viewBox="0 0 24 24" className="-mt-[3px]"><circle cx="12" cy="12" r="11.500" fill="#363636" /><path d="M9 10 H13.800 V17 H15.500 V19 H8.800 V17 H10.500 V12 H9 Z" fill="#eee" /><circle cx="12" cy="6.800" r="2" fill="#eee" /></svg>
              <Label className="pl-[9px] tracking-[0.85px]">Inspector</Label>
            </div>
            <div className="flex h-[36px] w-[567px] items-center justify-end pr-[21px]">
              <Lock />
              <div className="mt-[4px] ml-[12px]"><PaneMenu /></div>
            </div>
          </div>

          <div className="flex h-[797px] shrink-0">
            <ProjectPane />
            <div className="w-[5px] shrink-0 bg-[#a2a2a2]" />
            <InspectorPane />
            <div className="w-[4px] shrink-0 bg-[#a2a2a2]" />
            <div className="w-[2px] shrink-0 bg-[#808080]" />
            <div className="flex flex-1 flex-col bg-[#5a5f66]"><div className="h-[40px] bg-[#e4e4e4]" /></div>
          </div>
          <div className="h-[8px] shrink-0 bg-[#a0a0a0] pt-[7px]"><div className="h-px w-[165px] bg-[#c8c8c8]" /></div>

          <PickerDialog />
        </div>
      </div>
    </div>
  );
}
